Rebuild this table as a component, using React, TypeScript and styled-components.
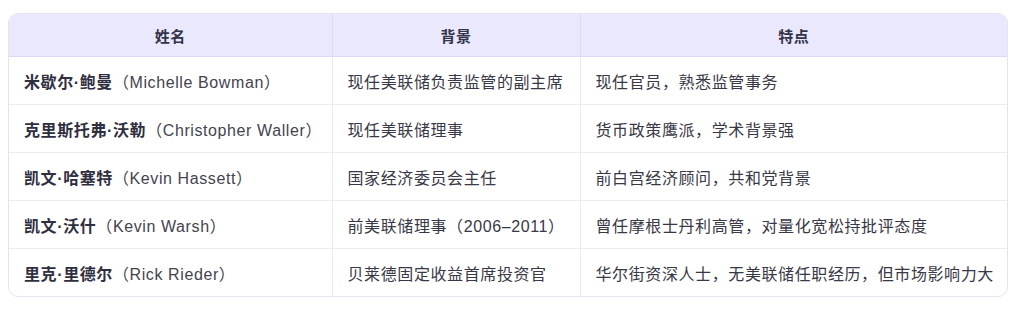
import React from "react";
import styled, { createGlobalStyle } from "styled-components";

const GlobalStyle = createGlobalStyle`
  html, body {
    margin: 0;
    padding: 0;
    background: #ffffff;
  }
  body {
    font-family: "Liberation Sans", "Noto Sans CJK SC", sans-serif;
  }
`;

const Page = styled.div`
  padding: 13px 11px 0 8px;
`;

const Frame = styled.div`
  width: 1000px;
  border: 1px solid #e4e4ee;
  border-radius: 10px;
  overflow: hidden;
  box-sizing: border-box;
`;

const Table = styled.table`
  width: 100%;
  border-collapse: collapse;
  table-layout: fixed;
  font-size: 16px;
  color: #383846;
`;

const HeadCell = styled.th`
  height: 42px;
  padding: 0 16px;
  background: #e9e8fc;
  color: #33334a;
  font-weight: 600;
  font-size: 15px;
  letter-spacing: 0.5px;
  text-align: center;
  border-bottom: 1px solid #dcdaf3;
  border-left: 1px solid #dedcf3;
  &:first-child {
    border-left: none;
  }
`;

const Row = styled.tr`
  &:not(:last-child) td {
    border-bottom: 1px solid #ebebf1;
  }
`;

const Cell = styled.td`
  height: 47px;
  padding: 0 15px;
  text-align: left;
  vertical-align: middle;
  border-left: 1px solid #ebebf1;
  letter-spacing: 0.6px;
  white-space: nowrap;
  &:first-child {
    border-left: none;
  }
`;

const Name = styled.strong`
  font-weight: 700;
  color: #2f2f3f;
`;

const Alias = styled.span`
  font-weight: 400;
  color: #44444f;
`;

const rows = [
  {
    cn: "米歇尔·鲍曼",
    en: "（Michelle Bowman）",
    bg: "现任美联储负责监管的副主席",
    tr: "现任官员，熟悉监管事务",
  },
  {
    cn: "克里斯托弗·沃勒",
    en: "（Christopher Waller）",
    bg: "现任美联储理事",
    tr: "货币政策鹰派，学术背景强",
  },
  {
    cn: "凯文·哈塞特",
    en: "（Kevin Hassett）",
    bg: "国家经济委员会主任",
    tr: "前白宫经济顾问，共和党背景",
  },
  {
    cn: "凯文·沃什",
    en: "（Kevin Warsh）",
    bg: "前美联储理事（2006–2011）",
    tr: "曾任摩根士丹利高管，对量化宽松持批评态度",
  },
  {
    cn: "里克·里德尔",
    en: "（Rick Rieder）",
    bg: "贝莱德固定收益首席投资官",
    tr: "华尔街资深人士，无美联储任职经历，但市场影响力大",
  },
];

export default function App() {
  return (
    <>
      <GlobalStyle />
      <Page>
        <Frame>
          <Table>
            <colgroup>
              <col style={{ width: 323 }} />
              <col style={{ width: 248 }} />
              <col />
            </colgroup>
            <thead>
              <tr>
                <HeadCell>姓名</HeadCell>
                <HeadCell>背景</HeadCell>
                <HeadCell>特点</HeadCell>
              </tr>
            </thead>
            <tbody>
              {rows.map((r) => (
                <Row key={r.cn}>
                  <Cell>
                    <Name>{r.cn}</Name>
                    <Alias>{r.en}</Alias>
                  </Cell>
                  <Cell>{r.bg}</Cell>
                  <Cell>{r.tr}</Cell>
                </Row>
              ))}
            </tbody>
          </Table>
        </Frame>
      </Page>
    </>
  );
}
